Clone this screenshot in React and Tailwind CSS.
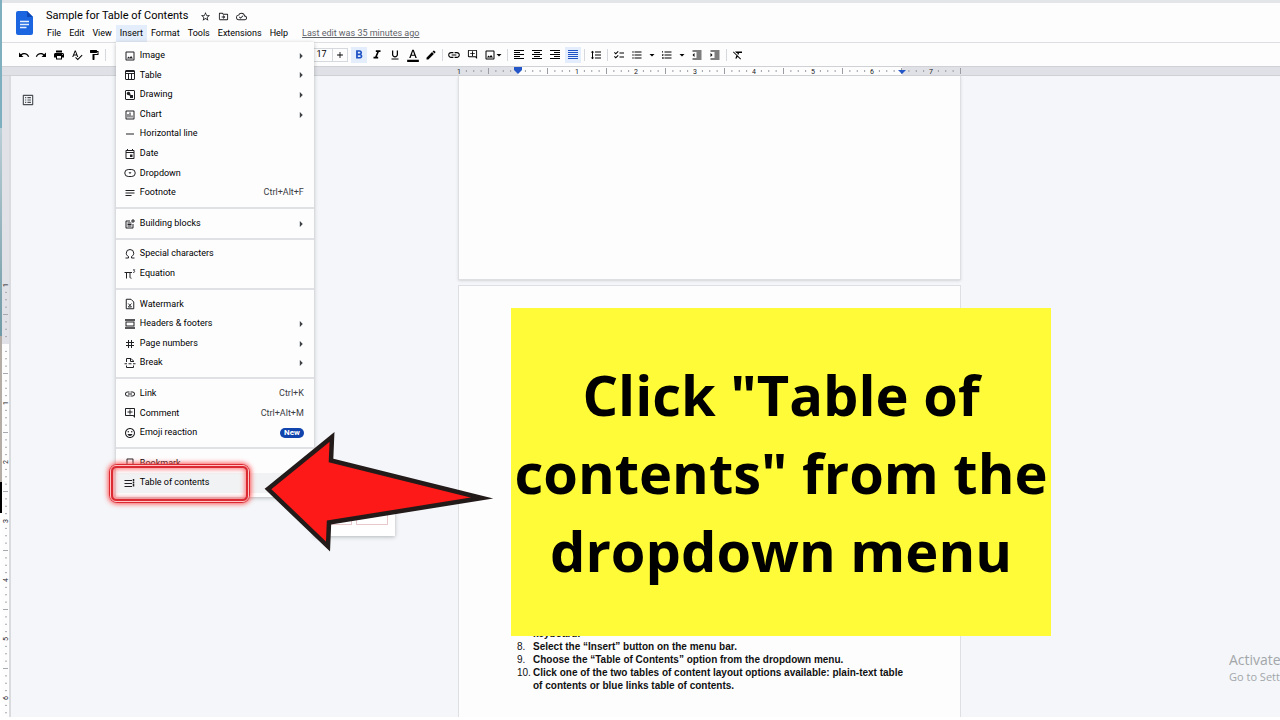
import React from 'react';
import {
  MdUndo,
  MdRedo,
  MdPrint,
  MdSpellcheck,
  MdFormatPaint,
  MdAdd,
  MdFormatBold,
  MdFormatItalic,
  MdFormatUnderlined,
  MdFormatColorText,
  MdEdit,
  MdLink,
  MdOutlineAddComment,
  MdOutlineImage,
  MdArrowDropDown,
  MdArrowRight,
  MdFormatLineSpacing,
  MdChecklist,
  MdFormatListBulleted,
  MdFormatListNumbered,
  MdFormatIndentDecrease,
  MdFormatIndentIncrease,
  MdFormatClear,
  MdStarBorder,
  MdOutlineDriveFileMove,
  MdOutlineCloudDone,
  MdOutlineListAlt,
  MdHorizontalRule,
  MdOutlineEvent,
  MdNotes,
  MdOutlinePostAdd,
  MdOutlineInsertChart,
  MdTag,
  MdOutlineEmojiEmotions,
  MdBookmarkBorder,
} from 'react-icons/md';

// Small icons that the icon set does not have
const Glyph = ({ children }) => (
  <svg width="12" height="12" viewBox="0 0 24 24" fill="none" stroke="currentColor" strokeWidth="2">
    {children}
  </svg>
);

const TableIcon = () => (
  <Glyph>
    <rect x="3" y="3" width="18" height="18" rx="1" />
    <path d="M3 5h18M3 9h18M9 9v12M15 9v12" />
  </Glyph>
);

const DrawingIcon = () => (
  <Glyph>
    <rect x="3" y="3" width="18" height="18" rx="1" />
    <circle cx="9" cy="9" r="3.500" fill="currentColor" stroke="none" />
    <path d="M9 9l7 7" strokeWidth="3" />
    <rect x="12" y="12" width="6" height="6" fill="currentColor" stroke="none" />
  </Glyph>
);

const DropdownIcon = () => (
  <Glyph>
    <rect x="1.500" y="5" width="21" height="14" rx="7" />
    <path d="M9 10.500h6l-3 3.500z" fill="currentColor" stroke="none" />
  </Glyph>
);

const OmegaIcon = () => (
  <Glyph>
    <path d="M3 20h6v-3C6 15.500 4.500 13 4.500 10.500a7.500 7.500 0 0 1 15 0c0 2.500-1.500 5-4.500 6.500v3h6" />
  </Glyph>
);

const EquationIcon = () => (
  <Glyph>
    <path d="M1 9h15M5 9v12M12 9v9c0 2 1 2.500 3 2.500" />
    <path d="M18 3.500h3.500L19.500 6c3 0 2.500 3.500-1.500 3" strokeWidth="1.500" />
  </Glyph>
);

const WatermarkIcon = () => (
  <Glyph>
    <path d="M4.500 2.500h9.500l5.500 5.500v13.500h-15z" />
    <path d="M8.500 11l6.500 7M15 11l-6.500 7M8.500 18h6.500" strokeWidth="1.800" />
  </Glyph>
);

const HeaderFooterIcon = () => (
  <Glyph>
    <path d="M2 4h20M2 20h20" strokeWidth="3" />
    <rect x="4" y="8" width="16" height="8" />
  </Glyph>
);

const BreakIcon = () => (
  <Glyph>
    <path d="M5 10V3h9l5 5v2M13 3v6h6" />
    <path d="M5 17v4h14v-4" />
    <path d="M1 13.500h5M9 13.500h6M18 13.500h5" />
  </Glyph>
);

const ContentsIcon = () => (
  <Glyph>
    <path d="M1 7h15M1 13h15M1 19h15" />
    <path d="M19 4v16" strokeWidth="3" strokeDasharray="4 1" />
  </Glyph>
);

const Lines = ({ d }) => (
  <svg width="10" height="10" viewBox="0 0 10 10" stroke="currentColor" strokeWidth="1">
    <path d={d} />
  </svg>
);

const AlignLeft = () => <Lines d="M0 .5h10M0 2.500h6M0 4.500h10M0 6.500h6M0 8.500h10" />;
const AlignCenter = () => <Lines d="M0 .5h10M2 2.500h6M0 4.500h10M2 6.500h6M0 8.500h10" />;
const AlignRight = () => <Lines d="M0 .5h10M4 2.500h6M0 4.500h10M4 6.500h6M0 8.500h10" />;
const AlignJustify = () => <Lines d="M0 .5h10M0 2.500h10M0 4.500h10M0 6.500h10M0 8.500h10" />;

const menuGroups = [
  [
    { label: 'Image', icon: MdOutlineImage, submenu: true },
    { label: 'Table', icon: TableIcon, submenu: true },
    { label: 'Drawing', icon: DrawingIcon, submenu: true },
    { label: 'Chart', icon: MdOutlineInsertChart, submenu: true },
    { label: 'Horizontal line', icon: MdHorizontalRule },
    { label: 'Date', icon: MdOutlineEvent },
    { label: 'Dropdown', icon: DropdownIcon },
    { label: 'Footnote', icon: MdNotes, shortcut: 'Ctrl+Alt+F' },
  ],
  [{ label: 'Building blocks', icon: MdOutlinePostAdd, submenu: true }],
  [
    { label: 'Special characters', icon: OmegaIcon },
    { label: 'Equation', icon: EquationIcon },
  ],
  [
    { label: 'Watermark', icon: WatermarkIcon },
    { label: 'Headers & footers', icon: HeaderFooterIcon, submenu: true },
    { label: 'Page numbers', icon: MdTag, submenu: true },
    { label: 'Break', icon: BreakIcon, submenu: true },
  ],
  [
    { label: 'Link', icon: MdLink, shortcut: 'Ctrl+K' },
    { label: 'Comment', icon: MdOutlineAddComment, shortcut: 'Ctrl+Alt+M' },
    { label: 'Emoji reaction', icon: MdOutlineEmojiEmotions, badge: 'New' },
  ],
  [
    { label: 'Bookmark', icon: MdBookmarkBorder },
    { label: 'Table of contents', icon: ContentsIcon, active: true },
  ],
];

const MenuItem = ({ item }) => {
  const Icon = item.icon;
  return (
    <button
      role="menuitem"
      className={`flex min-h-0 w-full flex-1 items-center pl-2 pr-[10px] text-left ${item.active ? 'bg-[#f1f2f3]' : ''}`}
    >
      <span className="flex w-4 shrink-0 items-center text-[12px] text-[#202124]">
        <Icon />
      </span>
      <span className="flex-1">{item.label}</span>
      {item.shortcut && <span className="text-[#3c4043]">{item.shortcut}</span>}
      {item.badge && (
        <span className="rounded-full bg-[#1144ad] px-1 text-[8px] leading-[10px] font-bold text-white">{item.badge}</span>
      )}
      {item.submenu && <MdArrowRight size={14} className="-mr-1 text-[#3c4043]" />}
    </button>
  );
};

const InsertMenu = () => (
  <div
    role="menu"
    className="absolute top-full left-0 z-20 flex h-[455px] w-[198px] flex-col bg-[#fdfdfe] py-1 text-[9px] text-black shadow-[0_1px_4px_rgba(60,64,67,0.35)]"
  >
    {menuGroups.map((group, i) => (
      <React.Fragment key={i}>
        {i > 0 && (
          <div className="flex h-[11px] shrink-0 items-center">
            <div className="h-[2px] w-full bg-[#dfe1e4]" />
          </div>
        )}
        {group.map((item) => (
          <MenuItem key={item.label} item={item} />
        ))}
      </React.Fragment>
    ))}

    {/* Layout picker that opens beside the last item */}
    <div className="absolute bottom-[-39px] left-full flex h-14 w-[81px] items-end gap-1 bg-white px-[7px] pb-[11px] shadow-[0_1px_4px_rgba(60,64,67,0.35)]">
      <div className="h-9 w-8 border border-[#e8c9cb]" />
      <div className="h-9 w-8 border border-[#e8c9cb]" />
    </div>
  </div>
);

const DocsLogo = () => (
  <svg width="17" height="24" viewBox="0 0 17 24">
    <path d="M2 0h9l6 6v16a2 2 0 0 1-2 2H2a2 2 0 0 1-2-2V2a2 2 0 0 1 2-2z" fill="#1b66e0" />
    <path d="M11 0l6 6h-6z" fill="#0d47b5" />
    <path d="M4 10.500h9M4 13.500h9M4 16.500h6.500" stroke="#e6effd" strokeWidth="1.500" />
  </svg>
);

const Header = () => (
  <header className="flex border-t-[3px] border-[#e3e5e8] bg-[#fdfdfe] pl-[14px]">
    <div className="pt-2">
      <DocsLogo />
    </div>
    <div className="pt-[6px] pl-[10px]">
      <div className="flex h-[15px] items-center pl-[3px]">
        <h1 className="text-[11px] text-black">Sample for Table of Contents</h1>
        <div className="flex items-center gap-[7px] pl-3 text-[#202124]">
          <button aria-label="Star"><MdStarBorder size={11} /></button>
          <button aria-label="Move"><MdOutlineDriveFileMove size={11} /></button>
          <button aria-label="Saved to Drive"><MdOutlineCloudDone size={11} /></button>
        </div>
      </div>
      <nav className="flex h-[18px] items-end text-[9px] text-black">
        {['File', 'Edit', 'View', 'Insert', 'Format', 'Tools', 'Extensions', 'Help'].map((name) =>
          name === 'Insert' ? (
            <div key={name} className="relative">
              <button className="h-[17px] bg-[#e4edfb] px-1">{name}</button>
              <InsertMenu />
            </div>
          ) : (
            <button key={name} className="h-[17px] px-1">{name}</button>
          )
        )}
        <a href="#history" className="ml-[10px] leading-[17px] text-[#5f6368] underline">Last edit was 35 minutes ago</a>
      </nav>
    </div>
  </header>
);

const Tool = ({ label, icon: Icon, on, size = 12 }) => (
  <button aria-label={label} className="flex flex-1 items-center justify-center">
    <span className={`flex h-4 w-4 items-center justify-center ${on ? 'bg-[#e3edfc] text-[#1c50c4]' : ''}`}>
      <Icon size={size} />
    </span>
  </button>
);

const Caret = ({ label, className = '' }) => (
  <button aria-label={label} className={`flex w-3 items-center justify-center ${className}`}>
    <MdArrowDropDown size={12} className="shrink-0" />
  </button>
);

const Divider = () => <div className="mx-[2px] h-3 w-px bg-[#d5d8dc]" />;

const Toolbar = () => (
  <div className="flex h-[24px] items-center border-t border-[#dcdee1] bg-[#fdfdfe] pl-[13px] text-black">
    <div className="flex w-[88px]">
      <Tool label="Undo" icon={MdUndo} />
      <Tool label="Redo" icon={MdRedo} />
      <Tool label="Print" icon={MdPrint} />
      <Tool label="Spelling" icon={MdSpellcheck} />
      <Tool label="Paint format" icon={MdFormatPaint} />
    </div>
    <Divider />
    <div className="w-[202px]" />
    <div className="flex h-[14px] items-center border border-[#d5d8dc] text-[9px]">
      <input aria-label="Font size" defaultValue="17" className="h-3 w-[22px] border-r border-[#d5d8dc] text-center" />
      <button aria-label="Increase font size" className="flex w-[14px] justify-center">
        <MdAdd size={10} />
      </button>
    </div>
    <div className="ml-[2px] flex w-[90px]">
      <Tool label="Bold" icon={MdFormatBold} on size={14} />
      <Tool label="Italic" icon={MdFormatItalic} size={14} />
      <Tool label="Underline" icon={MdFormatUnderlined} />
      <Tool label="Text color" icon={MdFormatColorText} size={14} />
      <Tool label="Highlight" icon={MdEdit} />
    </div>
    <Divider />
    <div className="flex w-[54px]">
      <Tool label="Insert link" icon={MdLink} size={14} />
      <Tool label="Add comment" icon={MdOutlineAddComment} size={11} />
      <Tool label="Insert image" icon={MdOutlineImage} />
    </div>
    <Caret label="Image options" className="-ml-[6px]" />
    <Divider />
    <div className="flex w-[72px]">
      <Tool label="Align left" icon={AlignLeft} />
      <Tool label="Align center" icon={AlignCenter} />
      <Tool label="Align right" icon={AlignRight} />
      <Tool label="Justify" icon={AlignJustify} on />
    </div>
    <Divider />
    <div className="flex w-[18px]">
      <Tool label="Line spacing" icon={MdFormatLineSpacing} />
    </div>
    <Divider />
    <div className="flex w-9">
      <Tool label="Checklist" icon={MdChecklist} />
      <Tool label="Bulleted list" icon={MdFormatListBulleted} />
    </div>
    <Caret label="Bullet styles" />
    <div className="flex w-[18px]">
      <Tool label="Numbered list" icon={MdFormatListNumbered} />
    </div>
    <Caret label="Number styles" />
    <div className="flex w-9">
      <Tool label="Decrease indent" icon={MdFormatIndentDecrease} />
      <Tool label="Increase indent" icon={MdFormatIndentIncrease} />
    </div>
    <Divider />
    <div className="flex w-[18px]">
      <Tool label="Clear formatting" icon={MdFormatClear} />
    </div>
  </div>
);

const INCH = 59;

// Eighth-inch ticks, with a longer one at each half
const ticks = (from, to) => {
  const list = [];
  for (let i = from * 8; i <= to * 8; i++) {
    if (i % 8 !== 0) list.push({ at: (i * INCH) / 8, half: i % 4 === 0 });
  }
  return list;
};

const HorizontalRuler = () => (
  <div className="h-[10px] border-y border-[#cfd1d5] bg-[#dfe1e6] pl-[457px]">
    <svg width="502" height="8" viewBox="-59 0 502 8" overflow="visible">
      <rect x="0" y="0" width="384" height="8" fill="#fdfdfe" />
      {ticks(-1, 7.5).map((t) => (
        <path key={t.at} d={t.half ? `M${t.at} 1v6` : `M${t.at} 3v2`} stroke="#9a9ea4" strokeWidth="1" />
      ))}
      {[-1, 1, 2, 3, 4, 5, 6, 7].map((n) => (
        <text key={n} x={n * INCH} y="7" textAnchor="middle" fontSize="7" fill="#202124">{Math.abs(n)}</text>
      ))}
      <path d="M-4 0h8v3l-4 4-4-4z" fill="#2456c8" />
      <path d="M380 3h8l-4 4z" fill="#2456c8" />
    </svg>
  </div>
);

const VerticalRuler = () => (
  <div className="w-[9px] shrink-0 overflow-hidden border-r-2 border-[#d9dbde] bg-[#fdfdfe]">
    <svg width="7" height="650" viewBox="0 -268 7 650">
      <rect x="0" y="-268" width="7" height="268" fill="#e1e2e8" />
      {ticks(-1, 6.5).map((t) => (
        <path key={t.at} d={t.half ? `M1 ${t.at}h5` : `M3 ${t.at}h2`} stroke="#a6a9ae" strokeWidth="1" />
      ))}
      {[-1, 1, 2, 3, 4, 5, 6].map((n) => (
        <text key={n} transform={`translate(6 ${n * INCH}) rotate(-90)`} textAnchor="middle" fontSize="7" fill="#202124">
          {Math.abs(n)}
        </text>
      ))}
    </svg>
  </div>
);

const steps = [
  { n: 7, text: 'keyboard.' },
  { n: 8, text: 'Select the “Insert” button on the menu bar.' },
  { n: 9, text: 'Choose the “Table of Contents” option from the dropdown menu.' },
  {
    n: 10,
    text: 'Click one of the two tables of content layout options available: plain-text table of contents or blue links table of contents.',
  },
];

const DocumentArea = () => (
  <main className="flex min-h-0 flex-1 overflow-hidden bg-[#f4f6f9]">
    <VerticalRuler />
    <div className="w-[447px] shrink-0 pt-[17px] pl-[10px] text-[#4d5156]">
      <button aria-label="Show document outline" className="block"><MdOutlineListAlt size={14} /></button>
    </div>
    <div className="flex w-[503px] shrink-0 flex-col gap-[5px]">
      <div className="h-[204px] shrink-0 border border-t-0 border-[#dddfe3] bg-[#fdfdfe] shadow-sm" />
      <div className="flex flex-1 flex-col justify-end border border-b-0 border-[#dddfe3] bg-[#fdfdfe] pr-12 pb-[25px] pl-[58px]">
        <ol className="font-['Liberation_Sans',Arial,sans-serif] text-[10px] leading-[13px] font-bold text-[#111]">
          {steps.map((s) => (
            <li key={s.n} className="flex">
              <span className="w-4 shrink-0 font-normal">{s.n > 7 && `${s.n}.`}</span>
              <span>{s.text}</span>
            </li>
          ))}
        </ol>
      </div>
    </div>
    <div className="flex min-w-0 flex-1 flex-col items-end justify-end pb-8 font-['Open_Sans',sans-serif] whitespace-nowrap text-[#a3a6aa]">
      <div className="w-[51px]">
        <p className="text-[14px] leading-[18px]">Activate</p>
        <p className="text-[11px] leading-4">Go to Sett</p>
      </div>
    </div>
  </main>
);

const Callout = () => (
  <div className="absolute top-[308px] left-[511px] z-30 flex h-[328px] w-[540px] items-center justify-center bg-[#fffb38]">
    <p className="text-center font-['Open_Sans',sans-serif] text-[56px] leading-[78px] font-bold whitespace-nowrap text-black">
      Click "Table of
      <br />
      contents" from the
      <br />
      dropdown menu
    </p>
  </div>
);

const Highlight = () => (
  <div className="absolute top-[464px] left-[109px] z-30 h-[39px] w-[141px] rounded-lg border-4 border-[#dc2a33] shadow-[0_0_5px_1px_#ff5050,inset_0_0_5px_1px_#ff7070]">
    <div className="absolute -inset-[3px] rounded-md border border-[#ffc4c4]" />
  </div>
);

const Arrow = () => (
  <svg className="absolute top-[425px] left-[260px] z-30" width="240" height="130" viewBox="260 425 240 130">
    <path
      d="M268 489L332 437L331 460.500L482 498L329 522.500L328 546.500Z"
      fill="#fd1917"
      stroke="#231a1a"
      strokeWidth="4.500"
      strokeMiterlimit="12"
    />
  </svg>
);

export default function App() {
  return (
    <div className="relative flex h-screen overflow-hidden bg-white font-['Roboto',sans-serif]">
      {/* Sliver of the desktop behind the browser window */}
      <div className="flex w-[2px] shrink-0 flex-col">
        <div className="h-32 bg-[#7fb0c0]" />
        <div className="h-52 bg-linear-to-b from-[#b9ced6] to-[#6f9aa5]" />
        <div className="h-[146px] bg-[#b3ada6]" />
        <div className="h-[31px] bg-black" />
      </div>
      <div className="flex min-w-0 flex-1 flex-col pb-[3px]">
        <Header />
        <Toolbar />
        <HorizontalRuler />
        <DocumentArea />
      </div>
      <Highlight />
      <Arrow />
      <Callout />
    </div>
  );
}
